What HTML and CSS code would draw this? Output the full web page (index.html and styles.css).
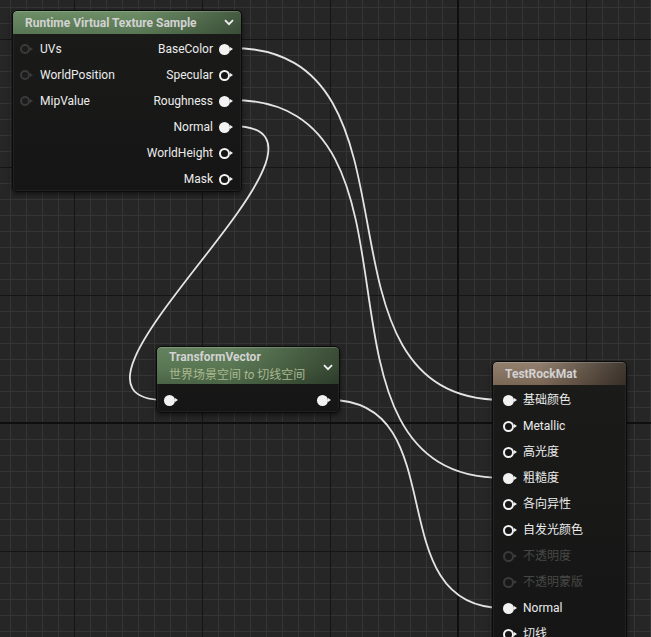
FILE: index.html
```html
<!DOCTYPE html>
<html>
<head>
<meta charset="utf-8">
<link rel="stylesheet" href="styles.css">
</head>
<body>
<div class="canvas">
  <svg class="wires" width="651" height="637" viewBox="0 0 651 637">
    <path d="M232,48 C439,48 296,400 503,400"/>
    <path d="M232,100 C448,100 287,478 503,478"/>
    <path d="M232,126 C380,126 20,400 165,400"/>
    <path d="M330,400 C456,400 377,608 503,608"/>
  </svg>

  <div class="node n1">
    <div class="hdr hdr-green">
      <span class="title">Runtime Virtual Texture Sample</span>
      <svg class="chev" width="10" height="7" viewBox="0 0 10 7"><path d="M1,1.2 L5,5.2 L9,1.2"/></svg>
    </div>
    <div class="body cols">
      <div class="col">
        <div class="row"><span class="pin pin-off"></span><span class="lbl">UVs</span></div>
        <div class="row"><span class="pin pin-off"></span><span class="lbl">WorldPosition</span></div>
        <div class="row"><span class="pin pin-off"></span><span class="lbl">MipValue</span></div>
      </div>
      <div class="col col-out">
        <div class="row"><span class="lbl">BaseColor</span><span class="pin pin-full"></span></div>
        <div class="row"><span class="lbl">Specular</span><span class="pin pin-ring"></span></div>
        <div class="row"><span class="lbl">Roughness</span><span class="pin pin-full"></span></div>
        <div class="row"><span class="lbl">Normal</span><span class="pin pin-full"></span></div>
        <div class="row"><span class="lbl">WorldHeight</span><span class="pin pin-ring"></span></div>
        <div class="row"><span class="lbl">Mask</span><span class="pin pin-ring"></span></div>
      </div>
    </div>
  </div>

  <div class="node n2">
    <div class="hdr hdr-green2">
      <div class="titles">
        <span class="title">TransformVector</span>
        <span class="subtitle">世界场景空间 <i>to</i> 切线空间</span>
      </div>
      <svg class="chev" width="10" height="7" viewBox="0 0 10 7"><path d="M1,1.2 L5,5.2 L9,1.2"/></svg>
    </div>
    <div class="body pins2">
      <span class="pin pin-full"></span>
      <span class="pin pin-full"></span>
    </div>
  </div>

  <div class="node n3">
    <div class="hdr hdr-brown">
      <span class="title">TestRockMat</span>
    </div>
    <div class="body list3">
      <div class="row"><span class="pin pin-full"></span><span class="lbl">基础颜色</span></div>
      <div class="row"><span class="pin pin-ring"></span><span class="lbl">Metallic</span></div>
      <div class="row"><span class="pin pin-ring"></span><span class="lbl">高光度</span></div>
      <div class="row"><span class="pin pin-full"></span><span class="lbl">粗糙度</span></div>
      <div class="row"><span class="pin pin-ring"></span><span class="lbl">各向异性</span></div>
      <div class="row"><span class="pin pin-ring"></span><span class="lbl">自发光颜色</span></div>
      <div class="row dim"><span class="pin pin-dim"></span><span class="lbl">不透明度</span></div>
      <div class="row dim"><span class="pin pin-dim"></span><span class="lbl">不透明蒙版</span></div>
      <div class="row"><span class="pin pin-full"></span><span class="lbl">Normal</span></div>
      <div class="row"><span class="pin pin-ring"></span><span class="lbl">切线</span></div>
    </div>
  </div>
</div>
</body>
</html>
```

FILE: styles.css
```css
html, body {
  margin: 0;
  padding: 0;
  background: #262626;
}

.canvas {
  position: relative;
  width: 651px;
  height: 637px;
  overflow: hidden;
  font-family: Roboto, "Noto Sans CJK SC", sans-serif;
  font-size: 12px;
  color: #ececec;
  background:
    linear-gradient(#0f0f0f, #0f0f0f) 457px 0 / 2px 100% no-repeat,
    linear-gradient(#0f0f0f, #0f0f0f) 0 422px / 100% 2px no-repeat,
    linear-gradient(90deg, #151515 1px, transparent 1px) 74px 0 / 128px 100%,
    linear-gradient(#151515 1px, transparent 1px) 0 39px / 100% 128px,
    linear-gradient(90deg, #353535 1px, transparent 1px) 10px 0 / 16px 100%,
    linear-gradient(#353535 1px, transparent 1px) 0 7px / 100% 16px,
    #262626;
}

.wires {
  position: absolute;
  left: 0;
  top: 0;
}
.wires path {
  fill: none;
  stroke: #e4e4e4;
  stroke-width: 1.8;
}

.node {
  position: absolute;
  box-sizing: border-box;
  border: 1px solid #0b0b0b;
  border-radius: 5px;
  background: linear-gradient(180deg, #1b1c1a 0%, #141514 100%);
  box-shadow: 0 2px 5px rgba(0, 0, 0, 0.55), inset 0 0 0 1px rgba(255, 255, 255, 0.05);
  overflow: hidden;
}

.n1 { left: 12px; top: 10px; width: 230px; height: 182px; }
.n2 { left: 156px; top: 346px; width: 184px; height: 67px; }
.n3 { left: 492px; top: 361px; width: 135px; height: 300px; }

.hdr {
  display: flex;
  align-items: center;
  justify-content: space-between;
  box-sizing: border-box;
  border-radius: 4px 4px 0 0;
  box-shadow: inset 0 1px 0 rgba(255, 255, 255, 0.18);
}

.hdr-green {
  height: 23px;
  padding: 0 7px 0 12px;
  background:
    linear-gradient(90deg, rgba(0, 0, 0, 0) 55%, rgba(0, 0, 0, 0.35) 100%),
    linear-gradient(180deg, #6d8e66 0%, #587654 100%);
}
.hdr-green2 {
  height: 37px;
  padding: 0 6px 0 12px;
  background:
    linear-gradient(90deg, rgba(0, 0, 0, 0) 40%, rgba(0, 0, 0, 0.4) 100%),
    linear-gradient(180deg, #63825d 0%, #5a7754 55%, #4a6445 100%);
}
.hdr-brown {
  height: 23px;
  padding: 0 8px 0 12px;
  background:
    linear-gradient(90deg, rgba(0, 0, 0, 0) 35%, rgba(0, 0, 0, 0.55) 100%),
    linear-gradient(180deg, #92806f 0%, #7b6756 100%);
}

.title {
  font-weight: 700;
  font-size: 12px;
  color: #d2d2d2;
  white-space: nowrap;
}

.titles {
  display: flex;
  flex-direction: column;
  gap: 1px;
}
.subtitle {
  font-size: 12px;
  color: #a9b98f;
  white-space: nowrap;
}

.chev { flex: none; }
.chev path {
  fill: none;
  stroke: #f0f0f0;
  stroke-width: 1.8;
}
.hdr-green2 .chev { margin-top: 4px; }

.body { box-sizing: border-box; }

.cols {
  display: flex;
  justify-content: space-between;
  padding: 2px 8px 0 7px;
}
.col { display: flex; flex-direction: column; }
.col-out { align-items: flex-end; }

.row {
  height: 26px;
  display: flex;
  align-items: center;
  gap: 6px;
  white-space: nowrap;
}

.lbl { line-height: 14px; }

.pins2 {
  display: flex;
  justify-content: space-between;
  align-items: center;
  height: 30px;
  padding: 3px 8px 0 7px;
}

.list3 {
  display: flex;
  flex-direction: column;
  padding: 2px 0 0 10px;
}
.dim .lbl { color: #474747; }

/* pins */
.pin {
  position: relative;
  flex: none;
  width: 14px;
  height: 11px;
}
.pin::before {
  content: "";
  position: absolute;
  left: 0;
  top: 0;
  width: 11px;
  height: 11px;
  box-sizing: border-box;
  border-radius: 50%;
}
.pin::after {
  content: "";
  position: absolute;
  left: 11px;
  top: 3px;
  width: 0;
  height: 0;
  border-left: 3px solid #f0f0f0;
  border-top: 2.5px solid transparent;
  border-bottom: 2.5px solid transparent;
}
.pin-full::before { background: #f2f2f2; }
.pin-ring::before { border: 2px solid #f2f2f2; background: #151515; }
.pin-off::before { border: 2px solid #3a3a3a; background: #1c1c1c; width: 10px; height: 10px; }
.pin-off::after { border-left-color: #3a3a3a; left: 10px; }
.pin-dim::before { border: 2px solid #3a3a3a; background: #171717; }
.pin-dim::after { border-left-color: #3a3a3a; }
```
